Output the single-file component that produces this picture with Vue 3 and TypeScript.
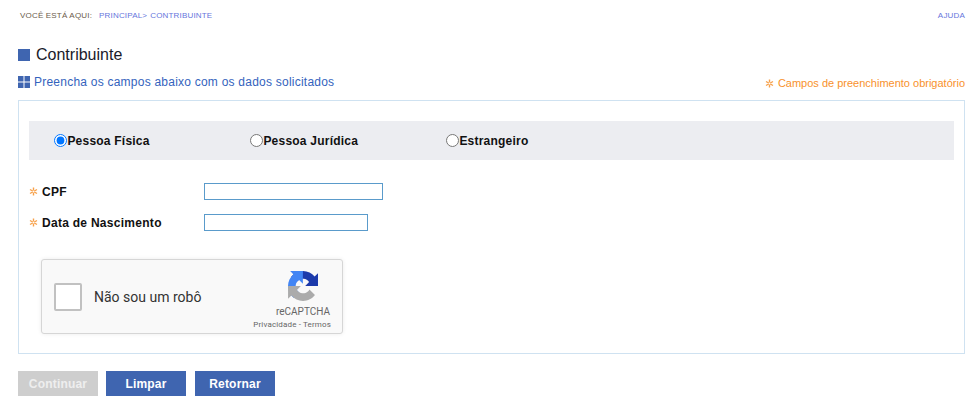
<script setup lang="ts">
const radios = [
  { label: 'Pessoa Física', checked: true },
  { label: 'Pessoa Jurídica', checked: false },
  { label: 'Estrangeiro', checked: false },
]
const fields = [
  { label: 'CPF', inputClass: 'input-cpf' },
  { label: 'Data de Nascimento', inputClass: 'input-date' },
]
</script>

<template>
  <div class="page">
    <div class="crumbs">
      <div class="crumb-left">
        <span class="here">VOCÊ ESTÁ AQUI:</span>
        <a class="link principal">PRINCIPAL&gt;</a>
        <a class="link">CONTRIBUINTE</a>
      </div>
      <a class="link">AJUDA</a>
    </div>

    <h1 class="title"><span class="title-square"></span>Contribuinte</h1>

    <div class="subhead">
      <div class="sub-left">
        <svg class="grid-icon" width="12" height="12" viewBox="0 0 12 12">
          <rect x="0" y="0" width="5.5" height="5.5" fill="#3f65b0" />
          <rect x="6.5" y="0" width="5.5" height="5.5" fill="#3f65b0" />
          <rect x="0" y="6.5" width="5.5" height="5.5" fill="#3f65b0" />
          <rect x="6.5" y="6.5" width="5.5" height="5.5" fill="#3f65b0" />
        </svg>
        <span>Preencha os campos abaixo com os dados solicitados</span>
      </div>
      <div class="required-note">
        <svg class="star" width="9" height="9" viewBox="0 0 9 9">
          <path d="M4.5 0.5V8.5M1 2.5L8 6.5M8 2.5L1 6.5" stroke="#f7a14a" stroke-width="1.4" fill="none" />
          <circle cx="4.5" cy="4.5" r="1" fill="#fff" />
        </svg>
        <span>Campos de preenchimento obrigatório</span>
      </div>
    </div>

    <div class="panel">
      <div class="radio-band">
        <label v-for="r in radios" :key="r.label" class="radio-item">
          <input type="radio" name="tipo" class="radio" :checked="r.checked" />{{ r.label }}
        </label>
      </div>

      <div class="fields">
        <div v-for="f in fields" :key="f.label" class="field">
          <label class="field-label">
            <svg class="star" width="9" height="9" viewBox="0 0 9 9">
              <path d="M4.5 0.5V8.5M1 2.5L8 6.5M8 2.5L1 6.5" stroke="#f7a14a" stroke-width="1.4" fill="none" />
              <circle cx="4.5" cy="4.5" r="1" fill="#fff" />
            </svg>
            {{ f.label }}
          </label>
          <input type="text" class="text-input" :class="f.inputClass" />
        </div>
      </div>

      <div class="captcha">
        <div class="captcha-check"></div>
        <span class="captcha-text">Não sou um robô</span>
        <div class="captcha-brand">
          <svg class="captcha-logo" width="30" height="30" viewBox="0 0 64 64">
            <path d="M64 31.955l-.033-1.37V4.687l-7.16 7.16C50.948 4.674 42.033.093 32.05.093c-10.4 0-19.622 4.96-25.458 12.64l11.736 11.86a15.55 15.55 0 0 1 4.754-5.334c2.05-1.6 4.952-2.906 8.968-2.906.485 0 .86.057 1.135.163 4.976.393 9.29 3.14 11.83 7.125l-8.307 8.307c10.522-.04 22.4-.066 27.295.005" fill="#1c3aab" />
            <path d="M31.862.094l-1.37.033H4.594l7.16 7.16C4.58 13.147 0 22.06 0 32.046c0 10.4 4.96 19.622 12.64 25.458L24.5 45.768a15.55 15.55 0 0 1-5.334-4.754c-1.6-2.05-2.906-4.952-2.906-8.968 0-.485.057-.86.163-1.135.393-4.976 3.14-9.29 7.125-11.83l8.307 8.307c-.04-10.522-.066-22.4.005-27.295" fill="#4285f4" />
            <path d="M.1 32l.033 1.37v25.898l7.16-7.16c5.86 7.173 14.774 11.754 24.76 11.754 10.4 0 19.622-4.96 25.458-12.64L45.774 39.364a15.55 15.55 0 0 1-4.754 5.334c-2.05 1.6-4.952 2.906-8.968 2.906-.485 0-.86-.057-1.135-.163-4.976-.393-9.29-3.14-11.83-7.125l8.307-8.307c-10.522.04-22.4.066-27.295-.005" fill="#ababab" />
          </svg>
          <div class="captcha-name">reCAPTCHA</div>
          <div class="captcha-links">Privacidade - Termos</div>
        </div>
      </div>
    </div>

    <div class="actions">
      <button class="btn btn-disabled" disabled>Continuar</button>
      <button class="btn">Limpar</button>
      <button class="btn btn-last">Retornar</button>
    </div>
  </div>
</template>

<style>
html, body { margin: 0; background: #fff; }
</style>

<style scoped>
.page {
  width: 978px;
  height: 417px;
  box-sizing: border-box;
  padding: 11px 13px 0 18px;
  font-family: "Liberation Sans", Arial, sans-serif;
  overflow: hidden;
}
.crumbs {
  display: flex;
  justify-content: space-between;
  align-items: center;
  height: 9px;
  padding-left: 2px;
  font-size: 8px;
  line-height: 9px;
  letter-spacing: 0.18px;
}
.crumb-left { display: flex; }
.here { color: #6b5b4b; margin-right: 7px; }
.link { color: #6675dc; }
.principal { margin-right: 3px; }
.title {
  display: flex;
  align-items: center;
  margin: 25px 0 0;
  height: 20px;
  font-size: 16px;
  font-weight: 400;
  color: #1a1a2a;
}
.title-square {
  width: 12px;
  height: 12px;
  background: #3f65b0;
  margin-right: 6px;
}
.subhead {
  display: flex;
  justify-content: space-between;
  align-items: center;
  margin-top: 10px;
  height: 14px;
}
.sub-left {
  display: flex;
  align-items: center;
  font-size: 12px;
  letter-spacing: 0.23px;
  color: #3463bd;
}
.grid-icon { margin-right: 4px; }
.required-note {
  display: flex;
  align-items: center;
  gap: 4px;
  font-size: 11px;
  color: #f8912c;
  position: relative;
  top: 1px;
}
.panel {
  margin-top: 11px;
  height: 254px;
  box-sizing: border-box;
  border: 1px solid #cfe2f1;
  padding: 20px 10px 0;
}
.radio-band {
  display: flex;
  height: 39px;
  align-items: center;
  background: #ecedf1;
  padding-left: 25px;
}
.radio-item {
  display: flex;
  align-items: center;
  width: 196px;
  font-size: 12px;
  font-weight: 700;
  letter-spacing: 0.22px;
  color: #111;
}
.radio {
  width: 13px;
  height: 13px;
  margin: 0 0.4px 0 0;
}
.fields {
  display: flex;
  flex-direction: column;
  gap: 14px;
  margin-top: 23px;
}
.field {
  display: flex;
  align-items: center;
  height: 17px;
}
.field-label {
  display: flex;
  align-items: center;
  gap: 4px;
  width: 175px;
  font-size: 12px;
  font-weight: 700;
  letter-spacing: 0.28px;
  color: #111;
}
.text-input {
  height: 17px;
  box-sizing: border-box;
  border: 1px solid #5a9bcb;
  padding: 0;
  background: #fff;
  outline: none;
}
.input-cpf { width: 179px; }
.input-date { width: 164px; }
.captcha {
  position: relative;
  display: flex;
  align-items: center;
  width: 302px;
  height: 75px;
  box-sizing: border-box;
  margin: 28px 0 0 12px;
  border: 1px solid #d6d6d6;
  border-radius: 3px;
  background: #f9f9f9;
  box-shadow: 0 0 4px rgba(0, 0, 0, 0.08);
  padding-left: 12px;
}
.captcha-check {
  width: 28px;
  height: 28px;
  box-sizing: border-box;
  border: 2px solid #c1c1c1;
  border-radius: 2px;
  background: #fff;
}
.captcha-text {
  margin-left: 12px;
  font-family: Roboto, sans-serif;
  font-size: 14px;
  color: #333;
}
.captcha-brand {
  position: absolute;
  right: 11px;
  top: 11px;
  width: 80px;
  display: flex;
  flex-direction: column;
  align-items: flex-end;
}
.captcha-logo { display: block; margin-right: 13px; }
.captcha-name {
  margin: 5px 1px 0 0;
  font-family: Roboto, sans-serif;
  font-size: 10px;
  line-height: 12px;
  color: #666;
}
.captcha-links {
  margin-top: 2px;
  font-family: Roboto, sans-serif;
  font-size: 8px;
  line-height: 10px;
  letter-spacing: 0.15px;
  color: #666;
}
.actions {
  display: flex;
  gap: 8px;
  margin-top: 17px;
}
.btn {
  width: 80px;
  height: 25px;
  border: none;
  padding: 0;
  background: #3f65b0;
  color: #fff;
  font-family: "Liberation Sans", Arial, sans-serif;
  font-size: 12px;
  font-weight: 700;
  letter-spacing: 0.2px;
}
.btn-disabled { background: #cecece; color: #eee; }
.btn-last { margin-left: 1px; }
</style>
